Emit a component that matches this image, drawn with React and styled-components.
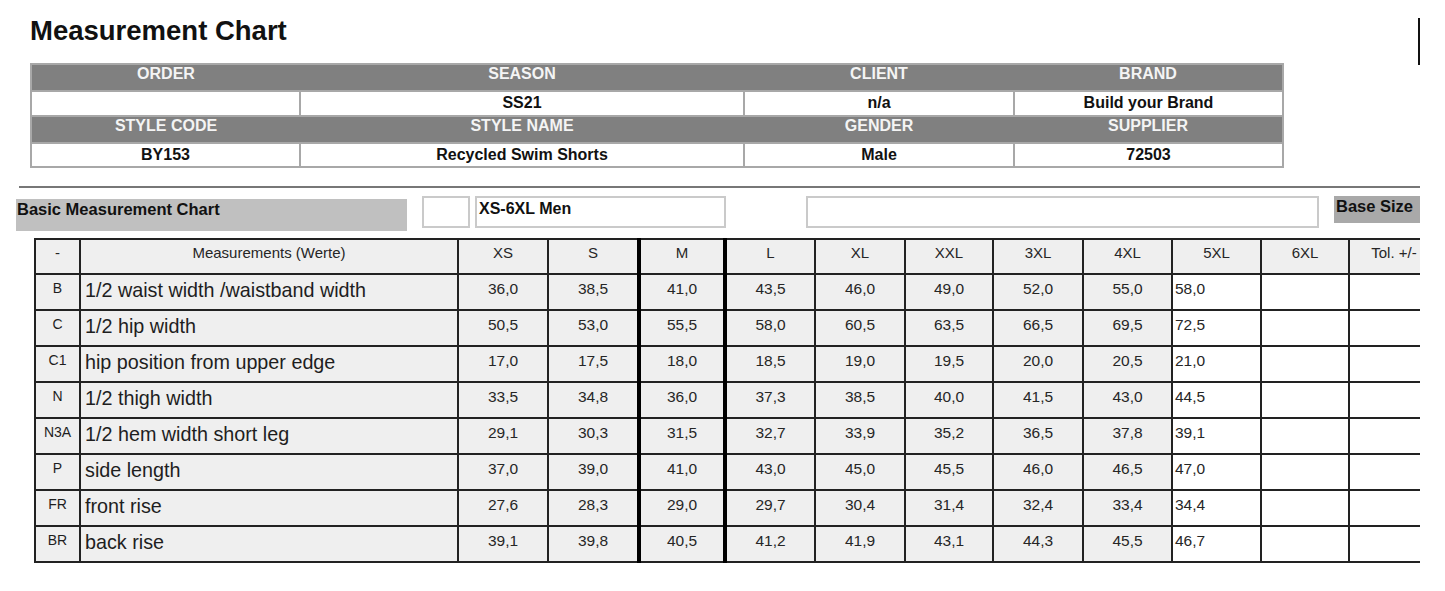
import React from 'react'
import styled, { createGlobalStyle } from 'styled-components'

const GlobalStyle = createGlobalStyle`
  body {
    margin: 0;
    background: #fff;
    font-family: "Liberation Sans", Arial, sans-serif;
    color: #1a1a1a;
  }
`

const Page = styled.div`
  width: 1420px;
  overflow: hidden;
  padding-bottom: 28px;
`

const TopRow = styled.div`
  display: flex;
  justify-content: space-between;
  align-items: flex-start;
  height: 45px;
  padding: 18px 0 0 30px;
`

const Title = styled.h1`
  margin: 0;
  font-size: 27.5px;
  line-height: 26px;
  font-weight: bold;
  color: #111;
`

const EdgeMark = styled.div`
  width: 2px;
  height: 47px;
  background: #111;
`

/* order info block */
const InfoTable = styled.table`
  margin-left: 30px;
  width: 1252px;
  border-collapse: collapse;
  table-layout: fixed;
  border: 2px solid #a8a8a8;
`

const InfoCol = styled.col`
  width: ${p => p.$w}px;
`

const InfoHead = styled.th`
  background: #808080;
  color: #f4f4f4;
  font-size: 16px;
  font-weight: bold;
  line-height: 16px;
  height: 24px;
  padding: 1px 0 0;
  vertical-align: top;
  text-align: center;
`

const InfoCell = styled.td`
  border: 2px solid #a8a8a8;
  background: #fff;
  color: #111;
  font-size: 16px;
  font-weight: bold;
  line-height: 18px;
  height: 22.5px;
  padding: 0;
  text-align: center;
  vertical-align: middle;
`

const Rule = styled.hr`
  margin: 18px 0 0 19px;
  border: 0;
  height: 2px;
  background: #777;
`

/* chart toolbar */
const Toolbar = styled.div`
  display: flex;
  align-items: flex-start;
  margin-top: 8px;
  padding-left: 16px;
`

const ChartLabel = styled.div`
  flex-shrink: 0;
  box-sizing: border-box;
  width: 391px;
  height: 32px;
  margin-top: 3px;
  padding: 1px 0 0 1px;
  background: #c0c0c0;
  font-size: 16.5px;
  font-weight: bold;
  line-height: 18px;
  color: #111;
`

const Field = styled.div`
  flex-shrink: 0;
  box-sizing: border-box;
  width: ${p => p.$w}px;
  height: 32px;
  margin-left: ${p => p.$gap}px;
  padding: 2px 0 0 2px;
  border: 2px solid #cacaca;
  font-size: 16px;
  font-weight: bold;
  line-height: 18px;
  color: #111;
`

const BaseSize = styled.div`
  flex-shrink: 0;
  box-sizing: border-box;
  width: 110px;
  height: 27px;
  margin-left: 15px;
  padding: 1px 0 0 2px;
  background: #a9a9a9;
  font-size: 16.5px;
  font-weight: bold;
  line-height: 18px;
  color: #111;
  white-space: nowrap;
`

/* measurement grid */
const Grid = styled.table`
  margin: 7px 0 0 34px;
  width: 1404px;
  border-collapse: collapse;
  table-layout: fixed;
`

const GridCol = styled.col`
  width: ${p => p.$w}px;
`

const HeadRow = styled.tr`
  height: 35px;
`

const BodyRow = styled.tr`
  height: 36px;
`

const HeadCell = styled.th`
  border: 2px solid #222;
  ${p => p.$base && 'border-left: 4px solid #000; border-right: 4px solid #000;'}
  background: #efefef;
  font-size: 15px;
  font-weight: normal;
  line-height: 17px;
  color: #262626;
  padding: 4px 0 0;
  text-align: center;
  vertical-align: top;
  white-space: nowrap;
`

const CodeCell = styled.td`
  border: 2px solid #222;
  background: #efefef;
  font-size: 14px;
  line-height: 16px;
  color: #1e1e1e;
  padding: 5px 0 0;
  text-align: center;
  vertical-align: top;
`

const NameCell = styled.td`
  border: 2px solid #222;
  background: #efefef;
  font-size: 19.75px;
  line-height: 22px;
  color: #1e1e1e;
  padding: 4px 0 0 4px;
  vertical-align: top;
  white-space: nowrap;
`

const ValueCell = styled.td`
  border: 2px solid #222;
  ${p => p.$base && 'border-left: 4px solid #000; border-right: 4px solid #000;'}
  background: ${p => (p.$blank ? '#fff' : '#efefef')};
  font-size: 15.5px;
  line-height: 18px;
  color: #262626;
  padding: ${p => (p.$left ? '5px 0 0 2px' : '5px 0 0')};
  text-align: ${p => (p.$left ? 'left' : 'center')};
  vertical-align: top;
`

const info = [
  [['ORDER', ''], ['SEASON', 'SS21'], ['CLIENT', 'n/a'], ['BRAND', 'Build your Brand']],
  [['STYLE CODE', 'BY153'], ['STYLE NAME', 'Recycled Swim Shorts'], ['GENDER', 'Male'], ['SUPPLIER', '72503']],
]

const sizes = ['XS', 'S', 'M', 'L', 'XL', 'XXL', '3XL', '4XL', '5XL', '6XL', 'Tol. +/-']
const colWidths = [45, 378, 90, 91, 86, 90, 90, 88, 90, 89, 89, 88, 90]

const rows = [
  ['B', '1/2 waist width /waistband width', ['36,0', '38,5', '41,0', '43,5', '46,0', '49,0', '52,0', '55,0', '58,0']],
  ['C', '1/2 hip width', ['50,5', '53,0', '55,5', '58,0', '60,5', '63,5', '66,5', '69,5', '72,5']],
  ['C1', 'hip position from upper edge', ['17,0', '17,5', '18,0', '18,5', '19,0', '19,5', '20,0', '20,5', '21,0']],
  ['N', '1/2 thigh width', ['33,5', '34,8', '36,0', '37,3', '38,5', '40,0', '41,5', '43,0', '44,5']],
  ['N3A', '1/2 hem width short leg', ['29,1', '30,3', '31,5', '32,7', '33,9', '35,2', '36,5', '37,8', '39,1']],
  ['P', 'side length', ['37,0', '39,0', '41,0', '43,0', '45,0', '45,5', '46,0', '46,5', '47,0']],
  ['FR', 'front rise', ['27,6', '28,3', '29,0', '29,7', '30,4', '31,4', '32,4', '33,4', '34,4']],
  ['BR', 'back rise', ['39,1', '39,8', '40,5', '41,2', '41,9', '43,1', '44,3', '45,5', '46,7']],
]

const App = () => {
  return (
    <Page>
      <GlobalStyle />
      <TopRow>
        <Title>Measurement Chart</Title>
        <EdgeMark />
      </TopRow>

      <InfoTable>
        <colgroup>
          {[269, 444, 270, 269].map((w, i) => <InfoCol key={i} $w={w} />)}
        </colgroup>
        <tbody>
          {info.map((group, g) => (
            <React.Fragment key={g}>
              <tr>
                {group.map(([label]) => <InfoHead key={label}>{label}</InfoHead>)}
              </tr>
              <tr>
                {group.map(([label, value]) => <InfoCell key={label}>{value}</InfoCell>)}
              </tr>
            </React.Fragment>
          ))}
        </tbody>
      </InfoTable>

      <Rule />

      <Toolbar>
        <ChartLabel>Basic Measurement Chart</ChartLabel>
        <Field $w={48} $gap={15} />
        <Field $w={251} $gap={5}>XS-6XL Men</Field>
        <Field $w={513} $gap={80} />
        <BaseSize>Base Size</BaseSize>
      </Toolbar>

      <Grid>
        <colgroup>
          {colWidths.map((w, i) => <GridCol key={i} $w={w} />)}
        </colgroup>
        <thead>
          <HeadRow>
            <HeadCell>-</HeadCell>
            <HeadCell>Measurements (Werte)</HeadCell>
            {sizes.map(s => <HeadCell key={s} $base={s === 'M'}>{s}</HeadCell>)}
          </HeadRow>
        </thead>
        <tbody>
          {rows.map(([code, name, values]) => (
            <BodyRow key={code}>
              <CodeCell>{code}</CodeCell>
              <NameCell>{name}</NameCell>
              {values.map((v, i) => (
                <ValueCell key={i} $base={i === 2} $left={i === 8} $blank={i === 8}>{v}</ValueCell>
              ))}
              <ValueCell $blank />
              <ValueCell $blank />
            </BodyRow>
          ))}
        </tbody>
      </Grid>
    </Page>
  )
}

export default App
